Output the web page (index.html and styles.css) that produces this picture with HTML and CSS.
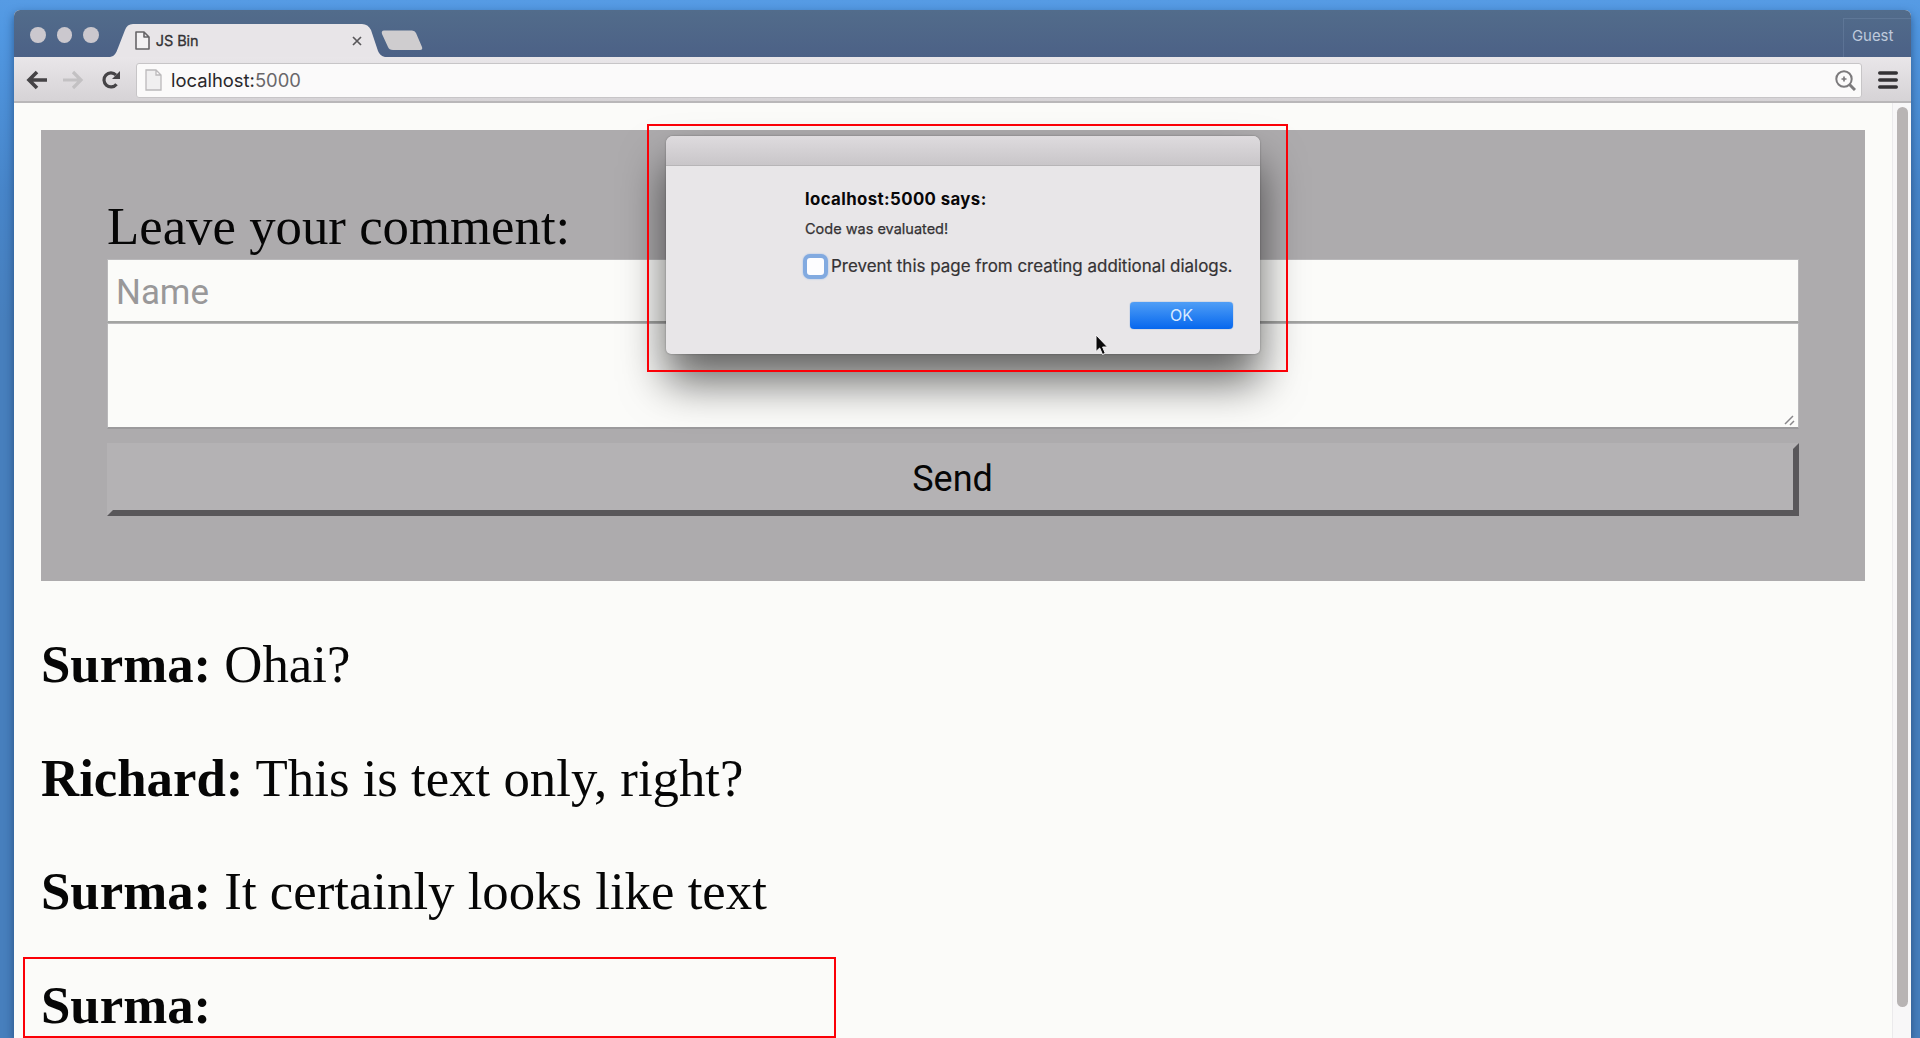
FILE: index.html
```html
<!DOCTYPE html>
<html lang="en">
<head>
<meta charset="utf-8">
<title>JS Bin</title>
<link rel="stylesheet" href="styles.css">
</head>
<body>
<div class="window">
  <header class="tabstrip">
    <div class="lights"><i></i><i></i><i></i></div>
    <div class="tab">
      <svg class="tab-shape" width="276" height="33" viewBox="0 0 276 33"><path d="M0 33C5 32 6 29 8 24L15 6Q17 0 23 0H252Q258 0 261 6L268 27Q270 32 275 33Z" fill="#e8e5e8"/></svg>
      <svg class="tab-doc" width="15" height="19" viewBox="0 0 15 19"><path d="M1 1H9L14 6V18H1ZM9 1V6H14" fill="#f3f1f3" stroke="#666467" stroke-width="1.6" stroke-linejoin="round"/></svg>
      <span class="tab-title">JS Bin</span>
      <svg class="tab-close" width="10" height="10" viewBox="0 0 10 10"><path d="M1 1L9 9M9 1L1 9" stroke="#59575a" stroke-width="1.7"/></svg>
    </div>
    <svg class="new-tab" width="42" height="21" viewBox="0 0 42 21"><path d="M3 .5H31Q34 .5 35 3L41 17Q42 20 39 20H12Q8 20 7 17L1 4Q0 .5 3 .5Z" fill="#cfcdcf"/></svg>
    <div class="guest">Guest</div>
  </header>
  <nav class="toolbar">
    <svg class="nav-icon" width="22" height="20" viewBox="0 0 22 20"><path d="M21 10H3M11 2L3 10L11 18" fill="none" stroke="#454346" stroke-width="3.6"/></svg>
    <svg class="nav-icon forward" width="22" height="20" viewBox="0 0 22 20"><path d="M1 10H19M11 2L19 10L11 18" fill="none" stroke="#c3c1c3" stroke-width="3.2"/></svg>
    <svg class="nav-icon reload" width="20" height="20" viewBox="0 0 20 20"><path d="M15.5 14.2A7 7 0 1 1 15 5" fill="none" stroke="#454346" stroke-width="3.2"/><path d="M19 1V9H11Z" fill="#454346"/></svg>
    <div class="address">
      <svg width="17" height="22" viewBox="0 0 17 22"><path d="M1 1H11L16 6V21H1ZM11 1V6H16" fill="#f0eff0" stroke="#bbb9bb" stroke-width="1.3"/></svg>
      <span class="url">localhost:<span class="port">5000</span></span>
      <svg class="magnifier" width="21" height="21" viewBox="0 0 21 21"><circle cx="9" cy="9" r="7.7" fill="none" stroke="#7c7a7c" stroke-width="2"/><path d="M14.5 14.5L20 20" stroke="#7c7a7c" stroke-width="3"/><path d="M6.5 9H11.5M9 6.5V11.5" stroke="#7c7a7c" stroke-width="1.7"/></svg>
    </div>
    <svg class="menu" width="20" height="18" viewBox="0 0 20 18"><path d="M1.7 2H18.3M1.7 9H18.3M1.7 16H18.3" stroke="#343235" stroke-width="3.4" stroke-linecap="round"/></svg>
  </nav>
  <div class="viewport">
    <main class="page">
      <form class="comment-form">
        <label class="prompt">Leave your comment:</label>
        <div class="field name">Name</div>
        <div class="field message"><svg width="12" height="12" viewBox="0 0 12 12"><path d="M1 10L9 2M6 11L10 7" stroke="#89878a" stroke-width="1.5"/></svg></div>
        <div class="send">Send</div>
      </form>
      <p class="comment"><b>Surma:</b> Ohai?</p>
      <p class="comment"><b>Richard:</b> This is text only, right?</p>
      <p class="comment"><b>Surma:</b> It certainly looks like text</p>
      <p class="comment"><b>Surma:</b></p>
    </main>
    <div class="scrollbar"><div class="thumb"></div></div>
  </div>
</div>

<section class="dialog">
  <div class="dialog-bar"></div>
  <div class="dialog-body">
    <h1 class="says">localhost:5000 says:</h1>
    <div class="text">Code was evaluated!</div>
    <div class="prevent"><span class="check"></span><span class="prevent-label">Prevent this page from creating additional dialogs.</span></div>
    <div class="ok">OK</div>
  </div>
</section>
<svg class="cursor" width="16" height="24" viewBox="0 0 16 24"><path d="M1 1V17.5L4.7 14L7.5 20.5L10.3 19.3L7.6 13H12.5Z" fill="#0b0a0b" stroke="#f4f2f4" stroke-width="1"/></svg>
<div class="mark mark-dialog"></div>
<div class="mark mark-comment"></div>
</body>
</html>
```
FILE: styles.css
```css
* { box-sizing: border-box; }
body {
  margin: 0;
  height: 1038px;
  overflow: hidden;
  padding: 10px 9px 0 14px;
  background: linear-gradient(#569be4 0, #5198e2 30px, #4785c9 190px, #477fbd 320px, #477fbd 100%);
}
svg { display: block; flex: none; }
.window {
  height: 1028px;
  display: flex;
  flex-direction: column;
  border-radius: 6px 6px 0 0;
  overflow: hidden;
  background: #fbfbf9;
  box-shadow: 0 4px 10px rgba(15, 40, 80, .55);
}

/* tab strip */
.tabstrip {
  height: 47px;
  flex: none;
  display: flex;
  align-items: flex-end;
  background: linear-gradient(#526c8b, #4c6186);
  font-family: Inter, "Liberation Sans", sans-serif;
}
.lights { display: flex; gap: 11px; padding-left: 16px; align-self: center; margin-top: 2px; }
.lights i { width: 15.6px; height: 16px; border-radius: 50%; background: #cbc8ce; }
.tab { position: relative; width: 276px; height: 33px; margin-left: 11px; display: flex; align-items: center; padding-left: 25px; }
.tab-shape { position: absolute; left: 0; top: 0; }
.tab-doc, .tab-title, .tab-close { position: relative; }
.tab-title { margin-left: 6px; font-size: 14.5px; letter-spacing: -.1px; color: #333134; -webkit-text-stroke: .3px #333134; }
.tab-close { margin-left: auto; margin-right: 24px; }
.new-tab { margin: 0 0 6px -5px; }
.guest {
  margin-left: auto;
  width: 68px;
  height: 39px;
  padding: 8px 0 0 8px;
  border: solid rgba(120, 143, 176, .35);
  border-width: 1px 0 0 1px;
  font-size: 14.9px;
  line-height: 18px;
  color: #bfcadc;
}

/* toolbar */
.toolbar {
  height: 46px;
  flex: none;
  display: flex;
  align-items: center;
  padding: 2px 13px 0 12px;
  background: linear-gradient(#e9e6e9, #d6d3d6);
  border-bottom: 2px solid #b9b7b9;
}
.forward { margin-left: 14px; }
.reload { margin-left: 17px; }
.address {
  flex: 1;
  height: 35px;
  margin: 0 16px 0 15px;
  padding: 0 5px 0 8px;
  display: flex;
  align-items: center;
  background: #fbfafa;
  border: 1px solid #c7c5c7;
  border-radius: 3px;
}
.url { margin-left: 9px; font: 18.4px/24px Inter, "Liberation Sans", sans-serif; color: #29272a; }
.port { color: #69676a; }
.magnifier { margin-left: auto; }

/* page */
.viewport { flex: 1; min-height: 0; display: flex; }
.page { flex: 1; padding: 27px 27px 0; font: 52.8px/61px "Liberation Serif", "Times New Roman", serif; color: #060606; }
.comment-form { height: 451px; padding: 66px 66px 0; background: #adabad; }
.prompt { display: block; height: 63px; }
.field { background: #fbfbf9; border: 1px solid #b9b8ba; }
.name {
  height: 64px;
  padding: 0 8px;
  border-bottom: 2px solid #a3a4a2;
  font: 34.9px/65px Roboto, "Liberation Sans", sans-serif;
  color: #999899;
}
.message { height: 106px; display: flex; align-items: flex-end; justify-content: flex-end; padding: 0 2px 1px; border-bottom: 2px solid #9b9a9c; }
.send {
  height: 73px;
  margin-top: 14px;
  border: 6px solid;
  border-color: #b4b2b4 #59575a #59575a #b4b2b4;
  background: #b4b2b4;
  font: 36px/60px Roboto, "Liberation Sans", sans-serif;
  text-align: center;
  text-indent: -1px;
}
.comment { margin: 0 0 52.7px; height: 61px; }
.comment-form + .comment { margin-top: 53px; }
.scrollbar { width: 19px; padding: 4px 4px 0; background: #f8f7f8; border-left: 1px solid #ebeaec; }
.thumb { width: 11px; height: 900px; border-radius: 6px; background: #b8b4b4; }

/* dialog */
.dialog {
  position: absolute;
  left: 666px;
  top: 136px;
  width: 594px;
  height: 218px;
  border-radius: 7px 7px 5px 5px;
  background: #e8e6e8;
  box-shadow: 0 0 2px rgba(0, 0, 0, .35), 0 28px 44px rgba(0, 0, 0, .6);
  font-family: Inter, "Liberation Sans", sans-serif;
  color: #343234;
}
.dialog-bar { height: 30px; border-radius: 7px 7px 0 0; border-bottom: 1px solid #b7b5b7; background: linear-gradient(#dedbde, #c9c6c9); }
.dialog-body { padding: 22px 27px 0 139px; display: flex; flex-direction: column; }
.says { margin: 0; font-size: 16.8px; letter-spacing: .4px; line-height: 22px; color: #080708; }
.text { margin-top: 10px; font-size: 14.5px; line-height: 18px; -webkit-text-stroke: .25px #343234; }
.prevent { display: flex; align-items: center; margin: 15px 0 0 -2px; height: 26px; }
.check { width: 25px; height: 25px; flex: none; border: 4px solid #82aae0; border-radius: 7px; background: #fdfdff; box-shadow: 0 0 2px #9bbbe6; }
.prevent-label { margin-left: 3px; font-size: 16.95px; white-space: nowrap; -webkit-text-stroke: .2px #343234; }
.ok {
  align-self: flex-end;
  width: 103px;
  height: 27px;
  margin-top: 23px;
  border-radius: 4px;
  background: linear-gradient(#4f9ef6, #0667ee);
  box-shadow: 0 0 1px #1767c6;
  font-size: 16px;
  line-height: 27px;
  text-align: center;
  color: #d9ebff;
}
.cursor { position: absolute; left: 1095px; top: 334px; }

/* red highlight frames */
.mark { position: absolute; border: 2px solid #fb0007; }
.mark-dialog { left: 647px; top: 124px; width: 641px; height: 248px; }
.mark-comment { left: 23px; top: 957px; width: 813px; height: 81px; }
```
